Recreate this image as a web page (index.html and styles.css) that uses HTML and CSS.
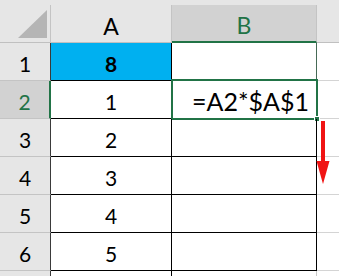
FILE: index.html
```html
<!DOCTYPE html>
<html>
<head>
<meta charset="utf-8">
<link rel="stylesheet" href="styles.css">
</head>
<body>
<div class="sheet">
  <div class="grid">
    <div class="hd corner">
      <svg class="tri" width="51" height="38" viewBox="0 0 51 38"><polygon points="47,5 47,33 18,33" fill="#b5b5b5"/></svg>
    </div>
    <div class="hd">A</div>
    <div class="hd sel">B</div>
    <div class="hd last"></div>

    <div class="rh">1</div>
    <div class="c a blue">8</div>
    <div class="c b b1"></div>
    <div class="e"></div>

    <div class="rh sel">2</div>
    <div class="c a">1</div>
    <div class="c b active">=A2*$A$1<span class="selbox"></span><span class="handle"></span></div>
    <div class="e"></div>

    <div class="rh">3</div>
    <div class="c a">2</div>
    <div class="c b"></div>
    <div class="e"></div>

    <div class="rh">4</div>
    <div class="c a">3</div>
    <div class="c b"></div>
    <div class="e"></div>

    <div class="rh">5</div>
    <div class="c a">4</div>
    <div class="c b"></div>
    <div class="e"></div>

    <div class="rh">6</div>
    <div class="c a">5</div>
    <div class="c b"></div>
    <div class="e"></div>

    <div class="rh"></div>
    <div class="c a7"></div>
    <div class="c b7"></div>
    <div class="e"></div>
  </div>
  <svg class="arrow" width="16" height="66" viewBox="0 0 16 66">
    <rect x="5" y="3" width="4" height="45" fill="#f01414"/>
    <polygon points="0.5,43 13.5,43 7,66" fill="#f01414"/>
  </svg>
</div>
</body>
</html>
```

FILE: styles.css
```css
* { box-sizing: border-box; }
html, body { margin: 0; padding: 0; background: #ffffff; }
body { font-family: Lato, "Open Sans", sans-serif; }

.sheet {
  position: relative;
  width: 339px;
  height: 276px;
  overflow: hidden;
  background: #ffffff;
}

.grid {
  display: grid;
  grid-template-columns: 51px 121px 145px 1fr;
  grid-template-rows: 38px repeat(7, 38px);
  padding-top: 5px;
  background: linear-gradient(#e6e6e6, #e6e6e6) top / 100% 5px no-repeat, #ffffff;
}

.hd {
  background: #e6e6e6;
  border-right: 1px solid #c4c4c4;
  border-bottom: 1px solid #c0c0c0;
  font-size: 23px;
  color: #000;
  display: flex;
  align-items: center;
  justify-content: center;
  padding-top: 4px;
}
.hd.corner { position: relative; padding: 0; }
.tri { position: absolute; left: 0; top: 0; }
.hd.sel {
  background: #d2d2d2;
  color: #217346;
  border-bottom: 2px solid #217346;
}
.hd.last { border-right: none; }

.rh {
  background: #e6e6e6;
  border-bottom: 1px solid #c4c4c4;
  border-right: 1px solid #3a3a3a;
  font-size: 21px;
  color: #000;
  display: flex;
  align-items: center;
  justify-content: center;
  padding-top: 3px;
}
.rh.sel {
  background: #d2d2d2;
  color: #217346;
  border-right: 2px solid #217346;
}

.c {
  position: relative;
  border-right: 1px solid #000;
  border-bottom: 1px solid #000;
  font-size: 21px;
  color: #000;
  display: flex;
  align-items: center;
  justify-content: center;
  padding-top: 3px;
}
.blue { background: #00b0f0; font-weight: bold; }
.b1 { border-right-color: #466a56; }
.active {
  justify-content: flex-end;
  padding-right: 7px;
  font-size: 25px;
  padding-top: 2px;
}
.selbox {
  position: absolute;
  left: -1px;
  top: -2px;
  right: -2px;
  bottom: -2px;
  border: 2px solid #217346;
}
.handle {
  position: absolute;
  right: -4px;
  bottom: -4px;
  width: 6px;
  height: 6px;
  background: #217346;
  border: 1px solid #ffffff;
}
.a7 { border-bottom: none; border-right-color: #000; }
.b7 { border-bottom: none; border-right-color: #c8c8c8; }

.e {
  border-bottom: 1px solid #d4d4d4;
}

.arrow {
  position: absolute;
  left: 316px;
  top: 118px;
}
```
